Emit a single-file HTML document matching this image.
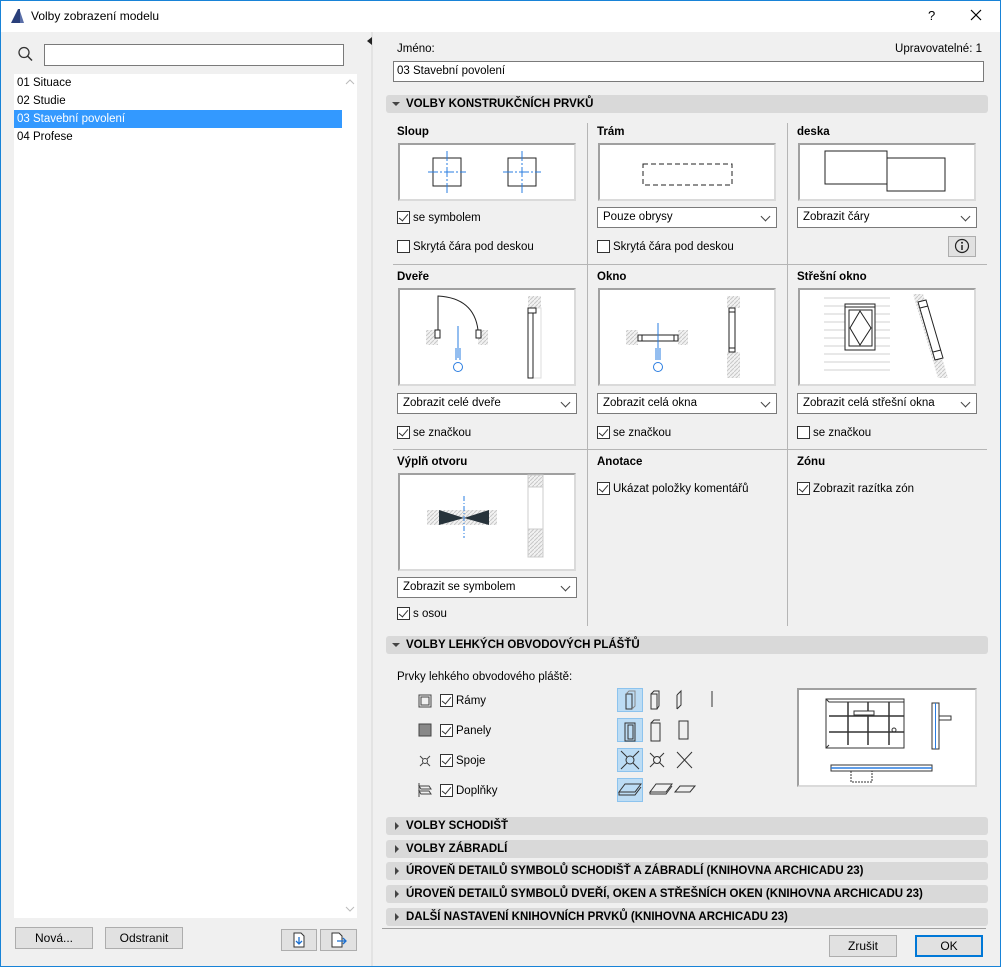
<!DOCTYPE html>
<html><head><meta charset="utf-8"><style>
*{box-sizing:border-box;margin:0;padding:0}
body{width:1001px;height:967px;position:relative;background:#f0f0f0;font-family:"Liberation Sans",sans-serif;font-size:12px;color:#000;overflow:hidden}
.a{position:absolute}
.win{position:absolute;left:0;top:0;width:1001px;height:967px;border:1px solid #1883d7;pointer-events:none}
.lbl{position:absolute;font-size:11.5px;white-space:nowrap}
.b{font-weight:bold}
.box{position:absolute;background:#fff;border:2px solid #dadada;border-top-color:#a0a0a0;border-left-color:#a0a0a0}
.dd{position:absolute;background:#fff;border:1px solid #7a7a7a;height:21px;padding:3px 5px;font-size:11.5px}
.dd:after{content:"";position:absolute;right:7px;top:5px;width:6px;height:6px;border-right:1px solid #444;border-bottom:1px solid #444;transform:rotate(45deg)}
.cb{position:absolute;width:13px;height:13px;background:#fff;border:1px solid #333}
.cb.on:after{content:"";position:absolute;left:3px;top:0px;width:4px;height:8px;border-right:1.3px solid #333;border-bottom:1.3px solid #333;transform:rotate(40deg)}
.hdr{position:absolute;left:386px;width:602px;height:18px;background:#d9d9d9;border-radius:3px;font-family:"Liberation Sans Narrow","Liberation Sans",sans-serif;font-weight:bold;font-size:11.5px;padding:3px 0 0 20px}
.hdr.c:before{content:"";position:absolute;left:9px;top:5px;border-left:4px solid #444;border-top:4px solid transparent;border-bottom:4px solid transparent}
.hdr.o:before{content:"";position:absolute;left:6px;top:7px;border-top:4px solid #444;border-left:4px solid transparent;border-right:4px solid transparent}
.btn{position:absolute;background:#e1e1e1;border:1px solid #adadad;text-align:center;font-size:12px;padding-top:3px}
.vl{position:absolute;width:1px;background:#b5b5b5}
.hl{position:absolute;height:1px;background:#b5b5b5}
</style></head><body>
<div class="a" style="left:0;top:0;width:1001px;height:32px;background:#fff"></div>
<svg class="a" style="left:9px;top:8px" width="16" height="16"><path d="M2 15 L9 1 L11 1 L11 15 Z" fill="#2a3f7a"/><path d="M11 3 L15 15 L11 15Z" fill="#5a6fa8"/></svg>
<div class="lbl" style="left:31px;top:9px;font-size:12px">Volby zobrazení modelu</div>
<div class="lbl" style="left:928px;top:8px;font-size:13px">?</div>
<svg class="a" style="left:970px;top:9px" width="12" height="12"><path d="M1 1L11 11M11 1L1 11" stroke="#000" stroke-width="1.2"/></svg>

<svg class="a" style="left:17px;top:46px" width="16" height="16"><circle cx="7" cy="6.5" r="5" fill="none" stroke="#333" stroke-width="1.3"/><path d="M10.5 10L15 14.5" stroke="#333" stroke-width="1.5"/></svg>
<div class="a" style="left:44px;top:44px;width:300px;height:22px;background:#fff;border:1px solid #7a7a7a"></div>
<div class="a" style="left:14px;top:74px;width:343px;height:844px;background:#fff"></div>
<div class="lbl" style="left:17px;top:77px">01 Situace</div>
<div class="lbl" style="left:17px;top:95px">02 Studie</div>
<div class="a" style="left:14px;top:110px;width:328px;height:18px;background:#3399ff"></div>
<div class="lbl" style="left:17px;top:113px;color:#fff">03 Stavební povolení</div>
<div class="lbl" style="left:17px;top:131px">04 Profese</div>
<svg class="a" style="left:345px;top:78px" width="10" height="8"><path d="M1 6L5 2L9 6" fill="none" stroke="#bbb"/></svg>
<svg class="a" style="left:345px;top:905px" width="10" height="8"><path d="M1 2L5 6L9 2" fill="none" stroke="#bbb"/></svg>
<div class="btn" style="left:15px;top:927px;width:78px;height:22px">Nová...</div>
<div class="btn" style="left:105px;top:927px;width:78px;height:22px">Odstranit</div>
<div class="btn" style="left:281px;top:929px;width:36px;height:22px"></div>
<svg class="a" style="left:291px;top:932px" width="16" height="16"><path d="M3 1H10L13 4V15H3Z" fill="#fff" stroke="#333"/><path d="M8 5V12M5 9L8 12L11 9" fill="none" stroke="#1a6fd0" stroke-width="1.3"/></svg>
<div class="btn" style="left:320px;top:929px;width:37px;height:22px"></div>
<svg class="a" style="left:330px;top:932px" width="18" height="16"><path d="M2 1H9L12 4V15H2Z" fill="#fff" stroke="#333"/><path d="M7 9H16M13 6L16 9L13 12" fill="none" stroke="#1a6fd0" stroke-width="1.3"/></svg>

<div class="a" style="left:371px;top:32px;width:2px;height:935px;background:#e3e3e3"></div>
<div class="a" style="left:367px;top:37px;border-right:5px solid #222;border-top:4px solid transparent;border-bottom:4px solid transparent"></div>

<div class="lbl" style="left:397px;top:43px">Jméno:</div>
<div class="lbl" style="right:19px;top:43px">Upravovatelné: 1</div>
<div class="a" style="left:393px;top:61px;width:591px;height:21px;background:#fff;border:1px solid #7a7a7a"></div>
<div class="lbl" style="left:397px;top:65px">03 Stavební povolení</div>

<div class="hdr o" style="top:95px">VOLBY KONSTRUKČNÍCH PRVKŮ</div>

<div class="vl" style="left:587px;top:123px;height:503px"></div>
<div class="vl" style="left:787px;top:123px;height:503px"></div>
<div class="hl" style="left:393px;top:264px;width:594px"></div>
<div class="hl" style="left:393px;top:449px;width:594px"></div>

<svg width="0" height="0" style="position:absolute"><defs><pattern id="h" width="4" height="4" patternUnits="userSpaceOnUse"><rect width="4" height="4" fill="#f2f2f2"/><path d="M0 4L4 0" stroke="#c8c8c8" stroke-width="1"/></pattern></defs></svg>

<div class="lbl b" style="left:397px;top:126px">Sloup</div>
<div class="box" style="left:398px;top:143px;width:178px;height:58px"></div>
<svg class="a" style="left:398px;top:143px" width="178" height="58"><rect x="35" y="15" width="28" height="28" fill="none" stroke="#222"/><path d="M30 29H68M49 8V50" stroke="#2a7de1" stroke-dasharray="10 2 2 2"/><rect x="110" y="15" width="28" height="28" fill="none" stroke="#222"/><path d="M105 29H143M124 8V50" stroke="#2a7de1" stroke-dasharray="10 2 2 2"/></svg>
<div class="cb on" style="left:397px;top:211px"></div><div class="lbl" style="left:413px;top:212px">se symbolem</div>
<div class="cb" style="left:397px;top:240px"></div><div class="lbl" style="left:413px;top:241px">Skrytá čára pod deskou</div>

<div class="lbl b" style="left:597px;top:126px">Trám</div>
<div class="box" style="left:598px;top:143px;width:178px;height:58px"></div>
<svg class="a" style="left:598px;top:143px" width="178" height="58"><rect x="45" y="21" width="89" height="21" fill="none" stroke="#222" stroke-dasharray="5 3"/></svg>
<div class="dd" style="left:597px;top:207px;width:180px">Pouze obrysy</div>
<div class="cb" style="left:597px;top:240px"></div><div class="lbl" style="left:613px;top:241px">Skrytá čára pod deskou</div>

<div class="lbl b" style="left:797px;top:126px">deska</div>
<div class="box" style="left:798px;top:143px;width:178px;height:58px"></div>
<svg class="a" style="left:798px;top:143px" width="178" height="58"><rect x="27" y="8" width="62" height="33" fill="#fff" stroke="#222"/><rect x="89" y="15" width="58" height="33" fill="#fff" stroke="#222"/></svg>
<div class="dd" style="left:797px;top:207px;width:180px">Zobrazit čáry</div>
<div class="btn" style="left:948px;top:236px;width:28px;height:21px"></div>
<svg class="a" style="left:954px;top:238px" width="16" height="16"><circle cx="8" cy="8" r="6.5" fill="none" stroke="#222" stroke-width="1.2"/><path d="M8 7V12" stroke="#222" stroke-width="1.5"/><circle cx="8" cy="4.7" r="1" fill="#222"/></svg>

<div class="lbl b" style="left:397px;top:271px">Dveře</div>
<div class="box" style="left:398px;top:288px;width:178px;height:98px"></div>
<svg class="a" style="left:398px;top:288px" width="178" height="98"><rect x="28" y="42" width="62" height="15" fill="url(#h)"/><rect x="40" y="42" width="40" height="15" fill="#fff"/><rect x="37" y="42" width="5" height="8" fill="#fff" stroke="#222"/><rect x="78" y="42" width="5" height="8" fill="#fff" stroke="#222"/><path d="M40 42V8Q76 10 80 42" fill="none" stroke="#222"/><path d="M60 38V70M58 60V72M62 60V72" stroke="#2a7de1"/><circle cx="60" cy="79" r="4.5" fill="#fff" stroke="#2a7de1"/><rect x="130" y="8" width="13" height="82" fill="url(#h)"/><rect x="130" y="20" width="13" height="70" fill="#fff" stroke="#ddd"/><rect x="130" y="20" width="5" height="70" fill="#fff" stroke="#222"/><rect x="130" y="20" width="8" height="5" fill="#fff" stroke="#222"/></svg>
<div class="dd" style="left:397px;top:393px;width:180px">Zobrazit celé dveře</div>
<div class="cb on" style="left:397px;top:426px"></div><div class="lbl" style="left:413px;top:427px">se značkou</div>

<div class="lbl b" style="left:597px;top:271px">Okno</div>
<div class="box" style="left:598px;top:288px;width:178px;height:98px"></div>
<svg class="a" style="left:598px;top:288px" width="178" height="98"><rect x="28" y="42" width="62" height="15" fill="url(#h)"/><rect x="40" y="42" width="40" height="15" fill="#fff"/><rect x="40" y="47" width="40" height="6" fill="#fff" stroke="#222"/><path d="M44 47V53M76 47V53" stroke="#222"/><path d="M60 35V72M58 60V72M62 60V72" stroke="#2a7de1"/><circle cx="60" cy="79" r="4.5" fill="#fff" stroke="#2a7de1"/><rect x="129" y="8" width="13" height="82" fill="url(#h)"/><rect x="129" y="20" width="13" height="44" fill="#fff"/><rect x="131" y="20" width="6" height="44" fill="#fff" stroke="#222"/><path d="M131 24H137M131 60H137" stroke="#222"/></svg>
<div class="dd" style="left:597px;top:393px;width:180px">Zobrazit celá okna</div>
<div class="cb on" style="left:597px;top:426px"></div><div class="lbl" style="left:613px;top:427px">se značkou</div>

<div class="lbl b" style="left:797px;top:271px">Střešní okno</div>
<div class="box" style="left:798px;top:288px;width:178px;height:98px"></div>
<svg class="a" style="left:798px;top:288px" width="178" height="98"><g stroke="#d0d0d0"><path d="M26 10H92M26 18H92M26 26H92M26 34H92M26 42H92M26 50H92M26 58H92M26 66H92M26 74H92M26 82H92"/></g><rect x="47" y="16" width="30" height="46" fill="#fff" stroke="#222"/><path d="M47 19H77" stroke="#222"/><rect x="51" y="22" width="23" height="36" fill="#fff" stroke="#222"/><path d="M62 23L73 40L62 57L52 40Z" fill="none" stroke="#222"/><path d="M115 6L125 6L150 90L140 90Z" fill="url(#h)"/><path d="M120 14L128 12L145 70L137 72Z" fill="#fff" stroke="#222"/><path d="M122 20L130 18M135 64L143 62" stroke="#222"/></svg>
<div class="dd" style="left:797px;top:393px;width:180px">Zobrazit celá střešní okna</div>
<div class="cb" style="left:797px;top:426px"></div><div class="lbl" style="left:813px;top:427px">se značkou</div>

<div class="lbl b" style="left:397px;top:456px">Výplň otvoru</div>
<div class="box" style="left:398px;top:473px;width:178px;height:98px"></div>
<svg class="a" style="left:398px;top:473px" width="178" height="98"><rect x="29" y="37" width="70" height="15" fill="url(#h)"/><path d="M41 37L66 45L41 52ZM91 37L66 45L91 52Z" fill="#27333b"/><path d="M66 23V65" stroke="#2a7de1" stroke-dasharray="5 2 1 2"/><rect x="130" y="2" width="15" height="82" fill="url(#h)" stroke="#ccc"/><rect x="130" y="14" width="15" height="42" fill="#fff" stroke="#ccc"/></svg>
<div class="dd" style="left:397px;top:577px;width:180px">Zobrazit se symbolem</div>
<div class="cb on" style="left:397px;top:607px"></div><div class="lbl" style="left:413px;top:608px">s osou</div>

<div class="lbl b" style="left:597px;top:456px">Anotace</div>
<div class="cb on" style="left:597px;top:482px"></div><div class="lbl" style="left:613px;top:483px">Ukázat položky komentářů</div>
<div class="lbl b" style="left:797px;top:456px">Zónu</div>
<div class="cb on" style="left:797px;top:482px"></div><div class="lbl" style="left:813px;top:483px">Zobrazit razítka zón</div>

<div class="hdr o" style="top:636px">VOLBY LEHKÝCH OBVODOVÝCH PLÁŠŤŮ</div>
<div class="lbl" style="left:397px;top:671px">Prvky lehkého obvodového pláště:</div>

<svg class="a" style="left:417px;top:693px" width="16" height="110"><rect x="2" y="2" width="12" height="12" fill="none" stroke="#444"/><rect x="4" y="4" width="8" height="8" fill="none" stroke="#444"/><rect x="2" y="31" width="12" height="12" fill="#888" stroke="#444"/><circle cx="8" cy="68" r="2.5" fill="none" stroke="#444"/><path d="M3 63L6 66M13 63L10 66M3 73L6 70M13 73L10 70" stroke="#444"/><path d="M2 93H12L14 96H4ZM2 98H12L14 101H4Z" fill="none" stroke="#444"/><path d="M2 90V104" stroke="#444"/></svg>
<div class="cb on" style="left:440px;top:694px"></div><div class="lbl" style="left:456px;top:695px">Rámy</div>
<div class="cb on" style="left:440px;top:724px"></div><div class="lbl" style="left:456px;top:725px">Panely</div>
<div class="cb on" style="left:440px;top:754px"></div><div class="lbl" style="left:456px;top:755px">Spoje</div>
<div class="cb on" style="left:440px;top:784px"></div><div class="lbl" style="left:456px;top:785px">Doplňky</div>

<div class="a" style="left:617px;top:688px;width:26px;height:24px;background:#bcdcf4;border:1px solid #8cc3ee"></div>
<div class="a" style="left:617px;top:718px;width:26px;height:24px;background:#bcdcf4;border:1px solid #8cc3ee"></div>
<div class="a" style="left:617px;top:748px;width:26px;height:24px;background:#bcdcf4;border:1px solid #8cc3ee"></div>
<div class="a" style="left:617px;top:778px;width:26px;height:24px;background:#bcdcf4;border:1px solid #8cc3ee"></div>
<svg class="a" style="left:617px;top:688px" width="100" height="115" fill="none" stroke="#333">
<rect x="9" y="6" width="6" height="15"/><path d="M9 6L12 3H18V18L15 21" stroke="#888"/>
<rect x="34" y="6" width="6" height="15"/><path d="M34 6L37 3H42V18L40 21"/>
<path d="M60 7V21M60 7L64 3V17L60 21" /><path d="M95 3V19"/>
<rect x="8" y="35" width="10" height="18"/><rect x="11" y="37" width="5" height="14"/><rect x="34" y="35" width="9" height="18"/><path d="M34 35L37 32H43"/><rect x="62" y="33" width="9" height="18"/>
<circle cx="13" cy="72" r="4"/><path d="M4 63L10 69M22 63L16 69M4 81L10 75M22 81L16 75"/><circle cx="40" cy="72" r="3.5"/><path d="M33 65L38 70M47 65L42 70M33 79L38 74M47 79L42 74M60 64L75 80M75 64L60 80"/>
<path d="M2 104L8 96H24L18 104ZM2 104V107H18L24 99M33 104L39 96H55L49 104ZM33 104V106H49L55 98M58 104L63 98H78L73 104Z"/></svg>

<div class="box" style="left:797px;top:688px;width:180px;height:99px"></div>
<svg class="a" style="left:799px;top:690px" width="176" height="95" fill="none" stroke="#333"><rect x="27" y="9" width="78" height="49"/><path d="M27 9L30 12H105M27 58L30 55"/><path d="M49 12V55M69 12V55M90 12V55M30 26H105M30 42H105" stroke-width="1.5"/><rect x="55" y="21" width="20" height="4" fill="#fff"/><circle cx="95" cy="40" r="2"/><rect x="133" y="13" width="7" height="46"/><path d="M136.5 13V59" stroke="#2a7de1"/><path d="M140 26H152V30H140"/><rect x="32" y="75" width="101" height="6"/><path d="M32 78H133" stroke="#2a7de1" stroke-width="1.5"/><path d="M52 81V92H73V81" stroke-dasharray="2 1"/></svg>

<div class="hdr c" style="top:817px">VOLBY SCHODIŠŤ</div>
<div class="hdr c" style="top:840px">VOLBY ZÁBRADLÍ</div>
<div class="hdr c" style="top:862px">ÚROVEŇ DETAILŮ SYMBOLŮ SCHODIŠŤ A ZÁBRADLÍ (KNIHOVNA ARCHICADU 23)</div>
<div class="hdr c" style="top:885px">ÚROVEŇ DETAILŮ SYMBOLŮ DVEŘÍ, OKEN A STŘEŠNÍCH OKEN (KNIHOVNA ARCHICADU 23)</div>
<div class="hdr c" style="top:908px">DALŠÍ NASTAVENÍ KNIHOVNÍCH PRVKŮ (KNIHOVNA ARCHICADU 23)</div>
<div class="hl" style="left:382px;top:928px;width:604px;background:#a0a0a0"></div>

<div class="btn" style="left:829px;top:935px;width:68px;height:22px">Zrušit</div>
<div class="btn" style="left:915px;top:935px;width:68px;height:22px;border:2px solid #0078d7;padding-top:2px">OK</div>
<div class="win"></div>
</body></html>
